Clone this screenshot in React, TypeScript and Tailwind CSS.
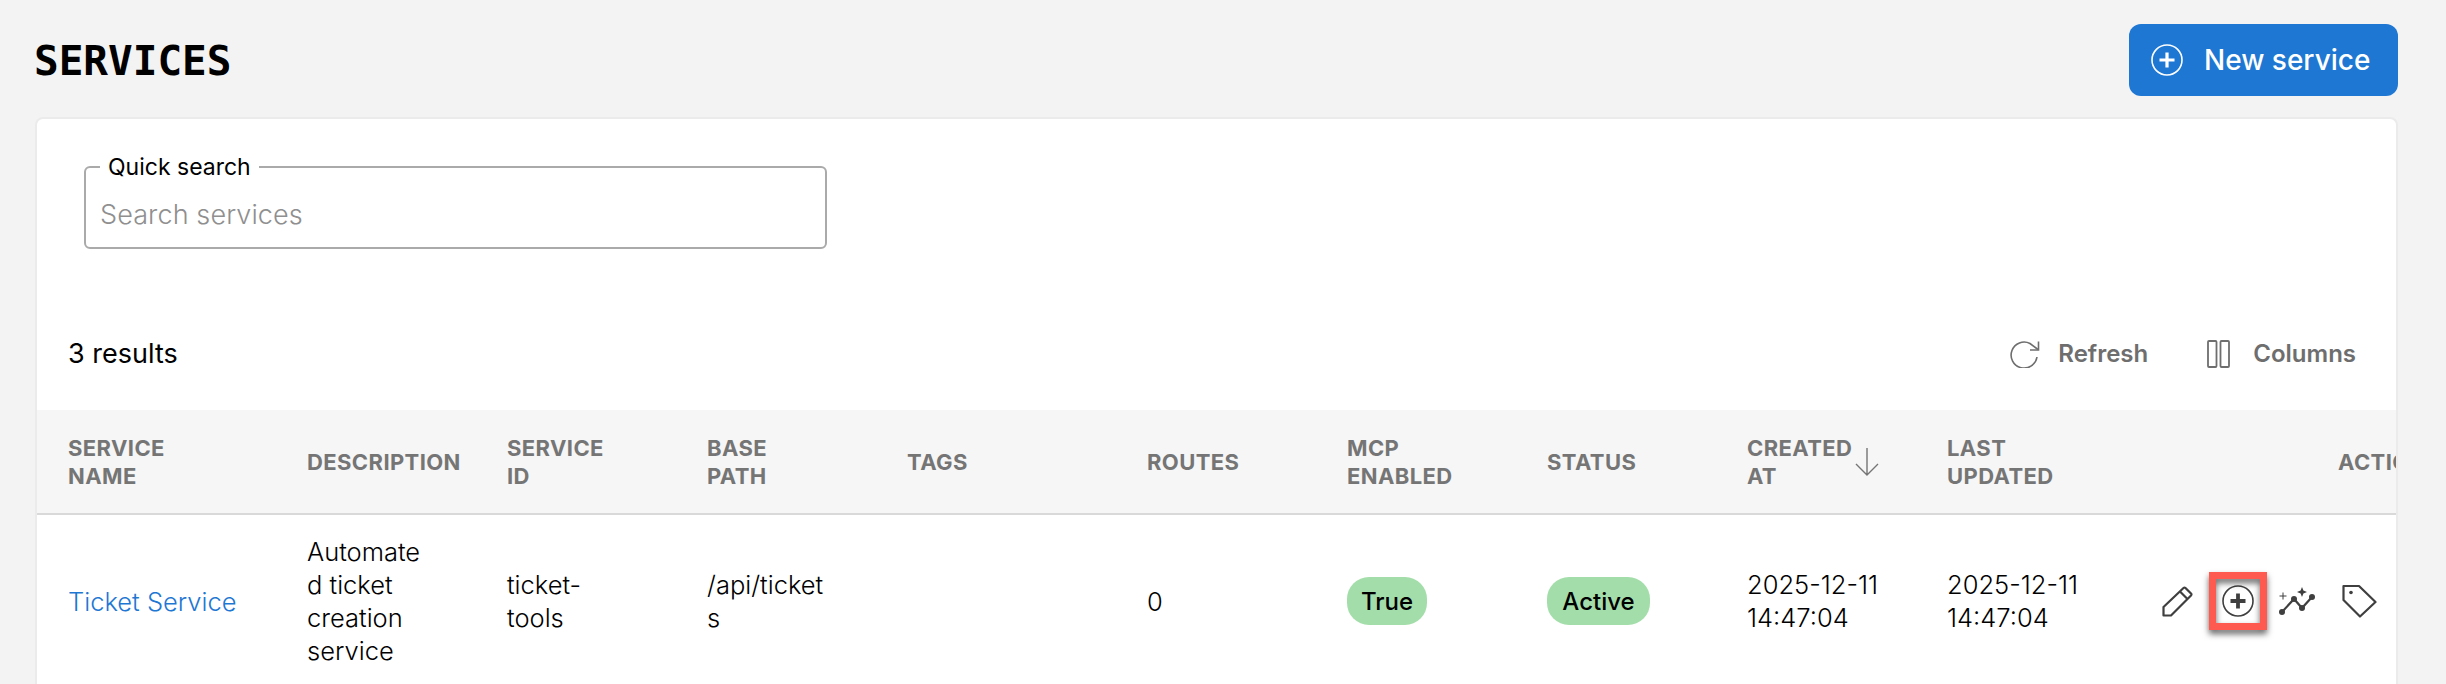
import type { ReactNode } from 'react';

type IconProps = { className?: string };

const PlusCircle = ({ className, weight = 3.2 }: IconProps & { weight?: number }) => (
  <svg viewBox="0 0 32 32" fill="none" stroke="currentColor" className={className}>
    <circle cx="16" cy="16" r="15" strokeWidth="1.6" />
    <path d="M16 8.5v15M8.5 16h15" strokeWidth={weight} />
  </svg>
);

const SparkTrend = ({ className }: IconProps) => (
  <svg viewBox="0 0 36 28" fill="none" stroke="currentColor" className={className}>
    <path d="M3 25 L15 12 L23 21 L33 10" strokeWidth="2.2" />
    <circle cx="3" cy="25" r="3" fill="currentColor" stroke="none" />
    <circle cx="15" cy="12" r="3" fill="currentColor" stroke="none" />
    <circle cx="23" cy="21" r="3" fill="currentColor" stroke="none" />
    <circle cx="33" cy="10" r="3" fill="currentColor" stroke="none" />
    <path d="M23 0 L24.4 3.6 L28 5 L24.4 6.4 L23 10 L21.6 6.4 L18 5 L21.6 3.6 Z" fill="currentColor" stroke="none" />
    <path d="M4 5.5v7M0.5 9h7" strokeWidth="1" />
  </svg>
);

const TagIcon = ({ className }: IconProps) => (
  <svg viewBox="0 0 35 34" fill="none" stroke="currentColor" strokeWidth="2.2" strokeLinejoin="round" className={className}>
    <path d="M1.5 2 H17 L33.5 18 L18 32.5 L1.5 16 Z" />
    <circle cx="9" cy="8.5" r="1.8" fill="currentColor" stroke="none" />
  </svg>
);

const Pencil = ({ className }: IconProps) => (
  <svg viewBox="0 0 31 31" fill="none" stroke="currentColor" strokeWidth="2.2" strokeLinejoin="round" className={className}>
    <path d="M1.5 21 L21.5 2 a1.5 1.5 0 0 1 2 0 L29 7.5 a1.5 1.5 0 0 1 0 2 L9 29.5 H1.5 Z" />
    <path d="M18 5.5 L25.5 13" />
  </svg>
);

const Refresh = ({ className }: IconProps) => (
  <svg viewBox="0 0 31 28" fill="none" stroke="currentColor" strokeWidth="1.6" className={className}>
    <path d="M28 17 A13 13 0 1 1 21 3.5 L29 9.5" />
    <path d="M29.5 1.5 V10 H21" />
  </svg>
);

const ColumnsIcon = ({ className }: IconProps) => (
  <svg viewBox="0 0 23 28" fill="none" stroke="currentColor" strokeWidth="1.8" className={className}>
    <rect x="1" y="1" width="8.5" height="26" rx="1" />
    <rect x="13.5" y="1" width="8.5" height="26" rx="1" />
  </svg>
);

const SortArrow = ({ className }: IconProps) => (
  <svg viewBox="0 0 24 28" fill="none" stroke="currentColor" strokeWidth="1.4" className={className}>
    <path d="M12 0v27M1 16l11 11 11-11" />
  </svg>
);

const Header = ({ children, className = '' }: { children: ReactNode; className?: string }) => (
  <th className={`pr-[16px] pl-[31px] text-left align-middle text-[22px] leading-[28px] font-bold tracking-[0.4px] text-[#757575] uppercase ${className}`}>
    {children}
  </th>
);

const Badge = ({ label, width }: { label: string; width: string }) => (
  <span className={`inline-flex h-[48px] items-center justify-center rounded-[22px] bg-[#a3deaa] text-[24px] font-medium ${width}`}>
    {label}
  </span>
);

export default function App() {
  return (
    <div className="h-screen overflow-hidden bg-[#f3f3f3] pr-[48px] pl-[35px] font-['Inter',sans-serif] text-black">
      <div className="flex h-[117px] items-start justify-between">
        <h1 className="mt-[37px] ml-[-1px] font-['DejaVu_Sans_Mono',monospace] text-[41px] leading-[48px] font-bold">SERVICES</h1>
        <button className="mt-[24px] flex h-[72px] w-[269px] items-center rounded-[12px] bg-[#1e77d3] pl-[22px] text-[28px] font-medium text-white">
          <PlusCircle className="mr-[21px] h-[32px] w-[32px]" />
          New service
        </button>
      </div>
      <div className="h-[567px] overflow-hidden rounded-t-[8px] border-x-2 border-t-2 border-[#ebebeb] bg-white">
        <div className="px-[47px] pt-[40px]">
          <fieldset className="h-[90px] w-[743px] rounded-[6px] border-2 border-[#aaaaaa] px-[14px]">
            <legend className="px-[8px] text-[23px] leading-[16px]">Quick search</legend>
            <div className="pt-[22px] text-[27px] leading-[36px] font-light tracking-[0.1px] text-[#8f8f8f]">Search services</div>
          </fieldset>
        </div>
        <div className="mt-[75px] mb-[26px] flex h-[60px] items-center justify-between pr-[40px] pl-[31px]">
          <div className="text-[27px]">3 results</div>
          <div className="flex items-center text-[24px] font-semibold text-[#6e6e6e]">
            <Refresh className="mr-[18px] h-[28px] w-[31px]" />
            <span className="mr-[59px]">Refresh</span>
            <ColumnsIcon className="mr-[23px] h-[28px] w-[23px]" />
            <span>Columns</span>
          </div>
        </div>
        <table className="w-[2640px] table-fixed border-collapse">
          <thead>
            <tr className="h-[104px] border-b-2 border-[#d9d9d9] bg-[#f6f6f6]">
              <Header className="w-[239px]">Service<br />name</Header>
              <Header className="w-[200px]">Description</Header>
              <Header className="w-[200px]">Service<br />ID</Header>
              <Header className="w-[200px]">Base<br />path</Header>
              <Header className="w-[240px]">Tags</Header>
              <Header className="w-[200px]">Routes</Header>
              <Header className="w-[200px]">MCP<br />enabled</Header>
              <Header className="w-[200px]">Status</Header>
              <Header className="w-[200px]">
                <div className="flex items-center">
                  <span className="w-[108px]">Created<br />at</span>
                  <SortArrow className="h-[28px] w-[24px]" />
                </div>
              </Header>
              <Header className="w-[200px]">Last<br />updated</Header>
              <Header className="pl-[222px]">Actions</Header>
            </tr>
          </thead>
          <tbody>
            <tr className="h-[173px] text-[25.5px] leading-[33px] font-light">
              <td className="pl-[31px] text-[#1e77d3]">Ticket Service</td>
              <td className="pl-[31px]">Automate<br />d ticket<br />creation<br />service</td>
              <td className="pl-[31px]">ticket-<br />tools</td>
              <td className="pl-[31px]">/api/ticket<br />s</td>
              <td />
              <td className="pl-[31px]">0</td>
              <td className="pl-[31px]"><Badge label="True" width="w-[80px]" /></td>
              <td className="pl-[31px]"><Badge label="Active" width="w-[103px]" /></td>
              <td className="pl-[31px]">2025-12-11<br />14:47:04</td>
              <td className="pl-[31px]">2025-12-11<br />14:47:04</td>
              <td className="pl-[46px]">
                <div className="flex items-center text-[#3f3f3f]">
                  <Pencil className="h-[31px] w-[31px]" />
                  <div className="relative ml-[16px] flex h-[58px] w-[58px] items-center justify-center">
                    <PlusCircle className="h-[32px] w-[32px]" weight={3.8} />
                    <span className="absolute inset-0 border-[7px] border-[#ff5a4f] drop-shadow-[0_4px_3px_rgba(0,0,0,0.6)]" />
                  </div>
                  <SparkTrend className="ml-[12px] h-[28px] w-[36px]" />
                  <TagIcon className="ml-[27px] h-[34px] w-[35px]" />
                </div>
              </td>
            </tr>
          </tbody>
        </table>
      </div>
    </div>
  );
}
